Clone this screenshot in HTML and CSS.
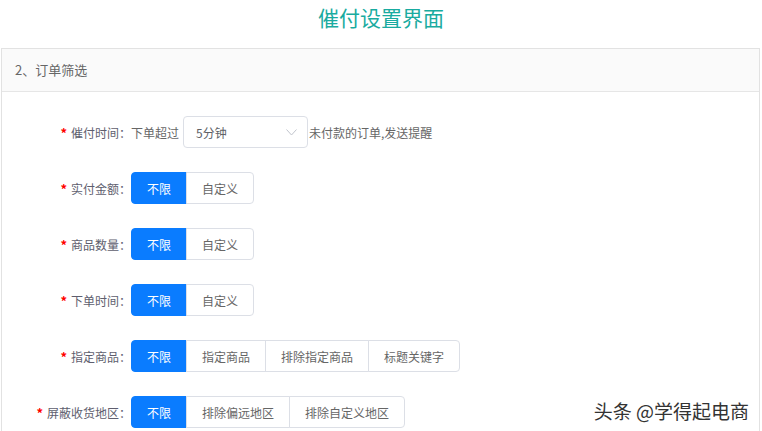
FILE: index.html
```html
<!DOCTYPE html>
<html lang="zh">
<head>
<meta charset="utf-8">
<title>催付设置界面</title>
<link rel="stylesheet" href="styles.css">
</head>
<body>
<h1 class="title">催付设置界面</h1>
<section class="panel">
  <div class="panel-head">2、订单筛选</div>
  <div class="panel-body">
    <div class="row">
      <div class="label"><span class="req">*</span>催付时间：</div>
      <div class="inline">
        <span class="txt">下单超过</span>
        <div class="select"><span>5分钟</span>
          <svg class="chev" width="11" height="7" viewBox="0 0 11 7"><path d="M0.5 0.5 L5.5 6 L10.5 0.5" fill="none" stroke="#c0c4cc" stroke-width="1"/></svg>
        </div>
        <span class="txt">未付款的订单,发送提醒</span>
      </div>
    </div>
    <div class="row">
      <div class="label"><span class="req">*</span>实付金额：</div>
      <div class="group"><span class="btn on">不限</span><span class="btn">自定义</span></div>
    </div>
    <div class="row">
      <div class="label"><span class="req">*</span>商品数量：</div>
      <div class="group"><span class="btn on">不限</span><span class="btn">自定义</span></div>
    </div>
    <div class="row">
      <div class="label"><span class="req">*</span>下单时间：</div>
      <div class="group"><span class="btn on">不限</span><span class="btn">自定义</span></div>
    </div>
    <div class="row">
      <div class="label"><span class="req">*</span>指定商品：</div>
      <div class="group"><span class="btn on">不限</span><span class="btn">指定商品</span><span class="btn">排除指定商品</span><span class="btn">标题关键字</span></div>
    </div>
    <div class="row">
      <div class="label"><span class="req">*</span>屏蔽收货地区：</div>
      <div class="group"><span class="btn on">不限</span><span class="btn">排除偏远地区</span><span class="btn">排除自定义地区</span></div>
    </div>
  </div>
</section>
<div class="watermark">头条 @学得起电商</div>
</body>
</html>
```
FILE: styles.css
```css
html, body {
  margin: 0;
  padding: 0;
  background: #fff;
  overflow: hidden;
  height: 431px;
}
body {
  font-family: "Noto Sans CJK SC", "Noto Sans", sans-serif;
  color: #606266;
  position: relative;
}
.title {
  margin: 0;
  height: 34px;
  line-height: 34px;
  font-size: 21px;
  font-weight: normal;
  text-align: center;
  color: #19aba0;
}
.panel {
  margin: 14px 2px 0 1px;
  border: 1px solid #e2e2e2;
  border-bottom: none;
  height: 400px;
}
.panel-head {
  height: 42px;
  line-height: 42px;
  background: #fafafa;
  border-bottom: 1px solid #e6e6e6;
  padding-left: 13px;
  font-size: 13px;
  color: #666;
}
.panel-body {
  padding-top: 24px;
  display: flex;
  flex-direction: column;
  gap: 24px;
}
.row {
  display: flex;
  align-items: center;
  height: 32px;
}
.label {
  width: 129px;
  text-align: right;
  font-size: 12px;
  color: #5e5e6e;
  flex-shrink: 0;
}
.req {
  color: #f00;
  margin-right: 4px;
  font-size: 13px;
  font-weight: bold;
}
.inline {
  display: flex;
  align-items: center;
  font-size: 12px;
  color: #666;
}
.txt {
  white-space: nowrap;
}
.select {
  width: 125px;
  height: 32px;
  box-sizing: border-box;
  border: 1px solid #dcdfe6;
  border-radius: 4px;
  margin: 0 1px 0 4px;
  padding: 0 10px 0 12px;
  display: flex;
  align-items: center;
  justify-content: space-between;
  color: #606266;
}
.chev {
  display: block;
}
.group {
  display: flex;
  height: 32px;
}
.btn {
  display: flex;
  align-items: center;
  box-sizing: border-box;
  height: 32px;
  padding: 0 15px;
  border: 1px solid #dcdfe6;
  margin-left: -1px;
  font-size: 12px;
  color: #666;
  background: #fff;
  white-space: nowrap;
}
.btn:first-child {
  margin-left: 0;
  border-radius: 4px 0 0 4px;
}
.btn:last-child {
  border-radius: 0 4px 4px 0;
}
.btn.on {
  background: #0a7cff;
  border-color: #0a7cff;
  color: #fff;
}
.watermark {
  position: absolute;
  right: 13px;
  bottom: 8px;
  font-size: 19px;
  line-height: 24px;
  color: #333;
  text-shadow: 0 0 2px #fff, 0 0 2px #fff;
}
```
